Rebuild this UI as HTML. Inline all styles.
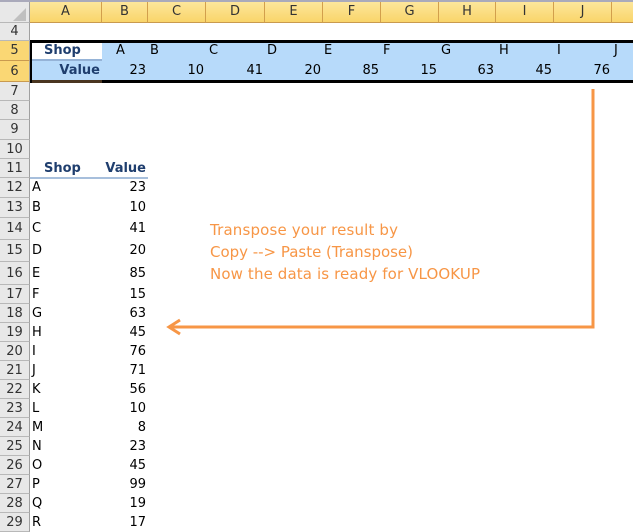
<!DOCTYPE html><html><head><style>
body{margin:0;width:633px;height:529px;overflow:hidden;background:#fff;font-family:"DejaVu Sans","Liberation Sans",sans-serif;font-size:13px;position:relative}
div{position:absolute;box-sizing:border-box}
.ch{top:2px;height:21px;background:linear-gradient(#fde69b,#f9d56a);border-right:1px solid #d29f4c;border-bottom:1px solid #c99a4f;text-align:center;line-height:20px;color:#333;font-size:13px}
.rh{left:0;width:30px;background:#e8e8e8;border-bottom:1px solid #b8b8b8;border-right:1px solid #a0a0a0;text-align:center;color:#333;font-size:13px}
.t{font-size:13px;color:#000}
</style></head><body>
<div style="left:0;top:0;width:633px;height:2px;background:#aab"></div>
<div style="left:0;top:2px;width:30px;height:21px;background:#e8e8e8;border-right:1px solid #a0a0a0;border-bottom:1px solid #b8b8b8"></div>
<svg style="position:absolute;left:13px;top:8px" width="14" height="14"><polygon points="13,0 13,13 0,13" fill="#c0c0c0"/></svg>
<div class="ch" style="left:30px;width:72px">A</div>
<div class="ch" style="left:102px;width:46px">B</div>
<div class="ch" style="left:148px;width:58px">C</div>
<div class="ch" style="left:206px;width:59px">D</div>
<div class="ch" style="left:265px;width:58px">E</div>
<div class="ch" style="left:323px;width:58px">F</div>
<div class="ch" style="left:381px;width:58px">G</div>
<div class="ch" style="left:439px;width:57px">H</div>
<div class="ch" style="left:496px;width:58px">I</div>
<div class="ch" style="left:554px;width:58px">J</div>
<div class="ch" style="left:612px;width:30px"></div>
<div class="rh" style="top:23px;height:18px;line-height:18px">4</div>
<div class="rh" style="top:41px;height:20px;line-height:20px;background:#fad774;border-bottom-color:#c99a4f">5</div>
<div class="rh" style="top:61px;height:21px;line-height:21px;background:#fad774;border-bottom-color:#c99a4f">6</div>
<div class="rh" style="top:82px;height:19px;line-height:19px">7</div>
<div class="rh" style="top:101px;height:19px;line-height:19px">8</div>
<div class="rh" style="top:120px;height:20px;line-height:20px">9</div>
<div class="rh" style="top:140px;height:19px;line-height:19px">10</div>
<div class="rh" style="top:159px;height:19px;line-height:19px">11</div>
<div class="rh" style="top:178px;height:20px;line-height:20px">12</div>
<div class="rh" style="top:198px;height:20px;line-height:20px">13</div>
<div class="rh" style="top:218px;height:22px;line-height:22px">14</div>
<div class="rh" style="top:240px;height:22px;line-height:22px">15</div>
<div class="rh" style="top:262px;height:23px;line-height:23px">16</div>
<div class="rh" style="top:285px;height:19px;line-height:19px">17</div>
<div class="rh" style="top:304px;height:19px;line-height:19px">18</div>
<div class="rh" style="top:323px;height:19px;line-height:19px">19</div>
<div class="rh" style="top:342px;height:19px;line-height:19px">20</div>
<div class="rh" style="top:361px;height:19px;line-height:19px">21</div>
<div class="rh" style="top:380px;height:19px;line-height:19px">22</div>
<div class="rh" style="top:399px;height:19px;line-height:19px">23</div>
<div class="rh" style="top:418px;height:19px;line-height:19px">24</div>
<div class="rh" style="top:437px;height:19px;line-height:19px">25</div>
<div class="rh" style="top:456px;height:19px;line-height:19px">26</div>
<div class="rh" style="top:475px;height:19px;line-height:19px">27</div>
<div class="rh" style="top:494px;height:19px;line-height:19px">28</div>
<div class="rh" style="top:513px;height:19px;line-height:19px">29</div>
<div style="left:102px;top:43px;width:531px;height:18px;background:#b7dafa"></div>
<div style="left:32px;top:61px;width:601px;height:19px;background:#b7dafa"></div>
<div style="left:30px;top:40px;width:603px;height:3px;background:#000"></div>
<div style="left:30px;top:80px;width:603px;height:3px;background:#000"></div>
<div style="left:30px;top:80px;width:72px;height:3px;background:#4a3520"></div>
<div style="left:30px;top:40px;width:2px;height:43px;background:#000"></div>
<div style="left:32px;top:59px;width:70px;height:2px;background:#95b3d7"></div>
<div class="t" style="left:44px;top:43px;font-weight:bold;color:#1f3e6e">Shop</div>
<div class="t" style="left:32px;top:63px;width:68px;text-align:right;font-weight:bold;color:#1f3e6e">Value</div>
<div class="t" style="left:116px;top:43px">A</div>
<div class="t" style="left:150px;top:43px">B</div>
<div class="t" style="left:209px;top:43px">C</div>
<div class="t" style="left:267px;top:43px">D</div>
<div class="t" style="left:324px;top:43px">E</div>
<div class="t" style="left:383px;top:43px">F</div>
<div class="t" style="left:441px;top:43px">G</div>
<div class="t" style="left:499px;top:43px">H</div>
<div class="t" style="left:557px;top:43px">I</div>
<div class="t" style="left:614px;top:43px">J</div>
<div class="t" style="left:102px;top:63px;width:44px;text-align:right">23</div>
<div class="t" style="left:148px;top:63px;width:56px;text-align:right">10</div>
<div class="t" style="left:206px;top:63px;width:57px;text-align:right">41</div>
<div class="t" style="left:265px;top:63px;width:56px;text-align:right">20</div>
<div class="t" style="left:323px;top:63px;width:56px;text-align:right">85</div>
<div class="t" style="left:381px;top:63px;width:56px;text-align:right">15</div>
<div class="t" style="left:439px;top:63px;width:55px;text-align:right">63</div>
<div class="t" style="left:496px;top:63px;width:56px;text-align:right">45</div>
<div class="t" style="left:554px;top:63px;width:56px;text-align:right">76</div>
<div class="t" style="left:44px;top:161px;font-weight:bold;color:#1f3e6e">Shop</div>
<div class="t" style="left:100px;top:161px;width:46px;text-align:right;font-weight:bold;color:#1f3e6e">Value</div>
<div style="left:30px;top:177px;width:118px;height:2px;background:#a7bfdc"></div>
<div id="tbl"></div>
<svg style="position:absolute;left:0;top:0" width="633" height="529">
<g fill="none" stroke="#f79646" stroke-width="3" stroke-linejoin="miter">
<path d="M593 89 V327 H170"/>
<path d="M180 320 L169 327 L180 334"/>
</g>
<g font-family="DejaVu Sans, Liberation Sans, sans-serif" font-size="15" fill="#f79646">
<text x="210" y="235" textLength="188">Transpose your result by</text>
<text x="210" y="257" textLength="203">Copy --&gt; Paste (Transpose)</text>
<text x="210" y="279" textLength="270">Now the data is ready for VLOOKUP</text>
</g>
</svg>
<script>
var r=[[178,20,"A",23],[198,20,"B",10],[218,22,"C",41],[240,22,"D",20],[262,23,"E",85],[285,19,"F",15],[304,19,"G",63],[323,19,"H",45],[342,19,"I",76],[361,19,"J",71],[380,19,"K",56],[399,19,"L",10],[418,19,"M",8],[437,19,"N",23],[456,19,"O",45],[475,19,"P",99],[494,19,"Q",19],[513,19,"R",17]];
var h="";r.forEach(function(a){var t=a[0]+Math.round((a[1]-16)/2);
h+='<div class="t" style="left:32px;top:'+t+'px">'+a[2]+'</div><div class="t" style="left:102px;top:'+t+'px;width:44px;text-align:right">'+a[3]+'</div>';});
document.getElementById("tbl").outerHTML=h;
</script>
</body></html>
